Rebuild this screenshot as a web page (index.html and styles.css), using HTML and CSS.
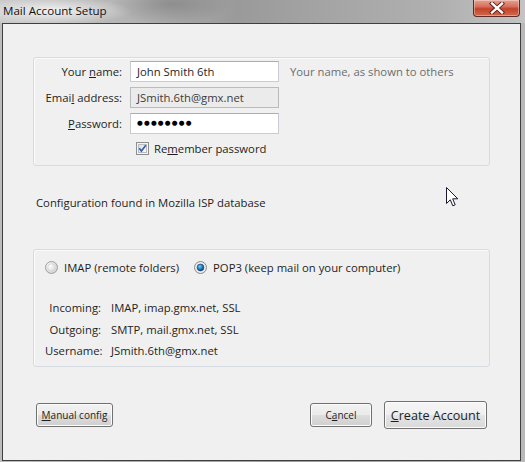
FILE: index.html
```html
<!DOCTYPE html>
<html lang="en">
<head>
<meta charset="utf-8">
<title>Mail Account Setup</title>
<link rel="stylesheet" href="styles.css">
</head>
<body>
<div class="window">
  <div class="titlebar">
    <span class="title">Mail Account Setup</span>
    <div class="close">
      <svg width="16" height="12" viewBox="0 0 16 12"><path d="M3 1.5 L13 10.5 M13 1.5 L3 10.5" stroke="#5a1a14" stroke-width="4.2" stroke-linecap="square"/><path d="M3 1.5 L13 10.5 M13 1.5 L3 10.5" stroke="#ffffff" stroke-width="2.4" stroke-linecap="square"/></svg>
    </div>
  </div>
  <div class="client">
    <div class="group identity">
      <div class="form-grid">
        <span class="lbl">Your <u>n</u>ame:</span>
        <div class="field">John Smith 6th</div>
        <span class="hint">Your name, as shown to others</span>
        <span class="lbl">Emai<u>l</u> address:</span>
        <div class="field disabled">JSmith.6th@gmx.net</div>
        <span></span>
        <span class="lbl"><u>P</u>assword:</span>
        <div class="field pwd">●●●●●●●●</div>
        <span></span>
      </div>
      <div class="remember">
        <svg class="checkbox" width="13" height="13" viewBox="0 0 13 13">
          <defs><linearGradient id="cb" x1="0" y1="0" x2="1" y2="1"><stop offset="0" stop-color="#dcdcdc"/><stop offset="1" stop-color="#ffffff"/></linearGradient></defs>
          <rect x="0.5" y="0.5" width="12" height="12" fill="#f4f4f4" stroke="#8e8f8f"/>
          <rect x="2.5" y="2.5" width="8" height="8" fill="url(#cb)" stroke="#b8bcc4"/>
          <path d="M3.3 6.2 L5.4 9 L9.8 3.2" fill="none" stroke="#3a5fa8" stroke-width="1.7"/>
        </svg>
        <span>Re<u>m</u>ember password</span>
      </div>
    </div>
    <p class="status">Configuration found in Mozilla ISP database</p>
    <div class="group protocol">
      <div class="radios">
        <label class="radio">
          <svg width="13" height="13" viewBox="0 0 13 13">
            <defs><radialGradient id="ru" cx="0.35" cy="0.35" r="0.8"><stop offset="0" stop-color="#ffffff"/><stop offset="1" stop-color="#c8c8c8"/></radialGradient></defs>
            <circle cx="6.5" cy="6.5" r="6" fill="url(#ru)" stroke="#a0a0a0"/>
            <circle cx="6.5" cy="6.5" r="3.8" fill="none" stroke="#d8d8d8"/>
          </svg>
          <span>IMAP (remote folders)</span>
        </label>
        <label class="radio">
          <svg width="13" height="13" viewBox="0 0 13 13">
            <defs><radialGradient id="rc" cx="0.4" cy="0.35" r="0.7"><stop offset="0" stop-color="#7ad0f5"/><stop offset="0.55" stop-color="#1f77bd"/><stop offset="1" stop-color="#0c3f73"/></radialGradient></defs>
            <circle cx="6.5" cy="6.5" r="6" fill="#eaeaea" stroke="#8a8a8a"/>
            <circle cx="6.5" cy="6.5" r="3.4" fill="url(#rc)" stroke="#17406e" stroke-width="0.6"/>
          </svg>
          <span>POP3 (keep mail on your computer)</span>
        </label>
      </div>
      <div class="details">
        <span class="dlbl">Incoming:</span><span>IMAP, imap.gmx.net, SSL</span>
        <span class="dlbl">Outgoing:</span><span>SMTP, mail.gmx.net, SSL</span>
        <span class="dlbl">Username:</span><span>JSmith.6th@gmx.net</span>
      </div>
    </div>
    <div class="buttons">
      <button class="btn small manual"><u>M</u>anual config</button>
      <span class="spacer"></span>
      <button class="btn small cancel">C<u>a</u>ncel</button>
      <button class="btn large create"><u>C</u>reate Account</button>
    </div>
  </div>
  <svg class="cursor" width="13" height="21" viewBox="0 0 13 21">
    <path d="M0.5 0.5 L0.5 16.5 L4.3 12.8 L6.8 18.8 L9.2 17.8 L6.7 11.8 L11.8 11.8 Z" fill="#ffffff" stroke="#1a1a2e" stroke-width="1" stroke-linejoin="miter"/>
  </svg>
</div>
</body>
</html>
```

FILE: styles.css
```css
html, body {
  margin: 0;
  padding: 0;
}

body {
  width: 525px;
  height: 462px;
  overflow: hidden;
  font-family: "Open Sans", "Noto Sans", sans-serif;
  font-size: 11.3px;
  color: #1e1e1e;
}

.window {
  position: relative;
  width: 525px;
  height: 462px;
  display: flex;
  flex-direction: column;
  background: linear-gradient(to right, #bdbdbd 0%, #a9a9a9 30%, #9d9d9d 55%, #a8a8a8 80%, #b9b9b9 100%);
}

.titlebar {
  height: 23px;
  display: flex;
  align-items: flex-start;
  justify-content: space-between;
  background:
    radial-gradient(ellipse 80px 14px at 52px 11px, rgba(255,255,255,0.8), rgba(255,255,255,0) 100%),
    radial-gradient(ellipse 60px 20px at 170px 4px, rgba(90,90,90,0.35), rgba(90,90,90,0) 100%),
    linear-gradient(to right, #c9c9c9 0%, #b3b3b3 25%, #9a9a9a 45%, #a6a6a6 65%, #b1b1b1 85%, #c4c4c4 100%);
}

.title {
  margin: 3px 0 0 3px;
  font-size: 11.6px;
  line-height: 16px;
  color: #111;
}

.close {
  width: 45px;
  height: 16px;
  margin-right: 5px;
  display: flex;
  align-items: center;
  justify-content: center;
  border: 1px solid #5d2a24;
  border-top: none;
  border-radius: 0 0 4px 4px;
  background: linear-gradient(to bottom, #e6a08f 0%, #d7705c 40%, #c2432b 55%, #cf6a4c 100%);
  box-shadow: inset 0 0 0 1px rgba(255,255,255,0.35);
}

.client {
  flex: 1;
  margin: 0 4px 1px 2px;
  border: 1px solid #3f3f3f;
  background: #f0f0f0;
  padding: 33px 30px 0 30px;
  display: flex;
  flex-direction: column;
}

.group {
  border: 1px solid #d5dbe0;
  border-radius: 3px;
  box-shadow: inset 1px 1px 0 #fbfbfb;
}

.identity {
  padding: 3px 0 0 0;
  box-sizing: border-box;
  height: 109px;
}

.form-grid {
  display: grid;
  grid-template-columns: 88px 149px auto;
  grid-auto-rows: 21px;
  column-gap: 8px;
  row-gap: 5px;
  align-items: center;
}

.lbl {
  text-align: right;
  color: #1e1e1e;
}

.hint {
  margin-left: 3px;
  color: #6d6d6d;
}

.field {
  height: 21px;
  box-sizing: border-box;
  border: 1px solid #c9cdd2;
  border-top-color: #abadb3;
  background: #fff;
  padding: 0 6px;
  line-height: 19px;
  color: #1e1e1e;
}

.field.disabled {
  background: #ebebeb;
  border-color: #b8bcc0;
  color: #3c3c3c;
}

.field.pwd {
  font-family: "DejaVu Sans", sans-serif;
  font-size: 6.6px;
  letter-spacing: 1.2px;
  color: #000;
}

.remember {
  margin: 6px 0 0 102px;
  height: 16px;
  display: flex;
  align-items: center;
  gap: 5px;
}

.status {
  margin: 29px 0 0 3px;
  line-height: 16px;
}

.protocol {
  margin-top: 38px;
  height: 118px;
  box-sizing: border-box;
  padding: 9px 0 0 11px;
}

.radios {
  display: flex;
  align-items: center;
  height: 16px;
  gap: 15px;
}

.radio {
  display: flex;
  align-items: center;
  gap: 6px;
}

.radio svg {
  flex: none;
}

.details {
  margin: 22px 0 0 0;
  display: grid;
  grid-template-columns: 56px auto;
  column-gap: 10px;
  grid-auto-rows: 21.5px;
  align-items: center;
}

.dlbl {
  text-align: right;
}

.buttons {
  margin-top: 34px;
  display: flex;
  align-items: center;
  padding-left: 3px;
  padding-right: 3px;
}

.spacer {
  flex: 1;
}

.btn {
  font-family: "Open Sans", "Noto Sans", sans-serif;
  color: #1e1e1e;
  border: 1px solid #707070;
  border-radius: 3px;
  background: linear-gradient(to bottom, #f2f2f2 0%, #ebebeb 48%, #dddddd 52%, #cfcfcf 100%);
  box-shadow: inset 0 0 0 1px #fcfcfc;
  padding: 0;
  cursor: default;
}

.btn.small {
  height: 24px;
  font-size: 10px;
}

.manual {
  width: 77px;
}

.cancel {
  width: 62px;
  margin-right: 12px;
}

.btn.large {
  height: 28px;
  width: 103px;
  font-size: 12.6px;
  background: linear-gradient(to bottom, #f6f6f6 0%, #efefef 48%, #e4e4e4 52%, #d9d9d9 100%);
}

.cursor {
  position: absolute;
  left: 446px;
  top: 187px;
}
```
